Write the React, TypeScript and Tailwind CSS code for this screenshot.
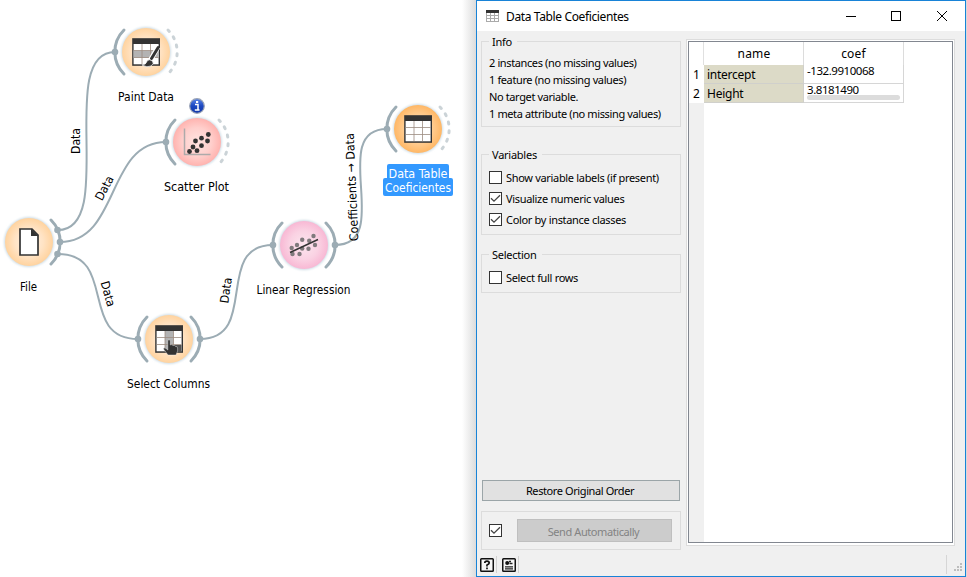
import React from "react";

const LINK = "#9cacb4";

type Tone = "orange" | "red" | "pink" | "amber";

function Arc({ side, dashed }: { side: "l" | "r"; dashed?: boolean }) {
  const d = side === "l" ? "M-22 -22A31 31 0 0 0 -22 22" : "M22 -22A31 31 0 0 1 22 22";
  return (
    <path
      d={d}
      fill="none"
      stroke={dashed ? "#cbd3d7" : LINK}
      strokeWidth={3}
      strokeLinecap="round"
      strokeDasharray={dashed ? "2 6.7" : undefined}
    />
  );
}

function Node({ x, y, tone, left, right, children }: {
  x: number;
  y: number;
  tone: Tone;
  left?: boolean;
  right?: "solid" | "dashed";
  children: React.ReactNode;
}) {
  return (
    <g transform={`translate(${x} ${y})`}>
      <circle r={25} fill="#cfdde6" filter="url(#soft)" />
      <circle r={24} fill={`url(#${tone})`} />
      {left && <Arc side="l" />}
      {left && <circle cx={-31} r={3.3} fill={LINK} />}
      {right && <Arc side="r" dashed={right === "dashed"} />}
      {right === "solid" && <circle cx={31} r={3.3} fill={LINK} />}
      {children}
    </g>
  );
}

function Label({ x, y, w, children, rotate = 0, fill = "#000" }: {
  x: number;
  y: number;
  w: number;
  children: string;
  rotate?: number;
  fill?: string;
}) {
  return (
    <text
      transform={`translate(${x} ${y}) rotate(${rotate})`}
      textAnchor="middle"
      textLength={w}
      lengthAdjust="spacingAndGlyphs"
      fontSize={12}
      fill={fill}
    >
      {children}
    </text>
  );
}

function TableGlyph({ shade }: { shade?: "row" | "col" }) {
  return (
    <g>
      <rect x={-13.8} y={-13.8} width={27.8} height={27.6} fill="#333" />
      <rect x={-12.4} y={-8} width={25} height={20.3} fill="#fff" />
      {shade === "row" && <rect x={-12.4} y={-1.3} width={25} height={7} fill="#b3b3b3" />}
      {shade === "col" && <rect x={-4} y={-8} width={8.4} height={20.3} fill="#b3b3b3" />}
      <path d="M-4 -8V12.3M4.5 -8V12.3M-12.4 -1.5H12.6M-12.4 5.5H12.6" stroke="#9c8c80" strokeWidth={0.8} />
    </g>
  );
}

const plotDots = [[-8, 9], [-4.5, 4.5], [-0.5, 8.2], [-2, -1.5], [4, 3.2], [4, -4.3], [10, -1.5], [10.8, -8]];
const fitDots = [[-12.3, 3], [-11.5, 9], [-7, 0], [-4.5, 9], [-1.8, -5.2], [-1.8, 3.5], [4.5, 3.8], [5.2, -4.3], [9.5, -9], [11, 0]];

function Workflow() {
  return (
    <svg width={476} height={577} viewBox="0 0 476 577" className="block font-['DejaVu_Sans_Condensed','DejaVu_Sans',sans-serif]">
      <defs>
        <filter id="soft" x="-30%" y="-30%" width="160%" height="160%"><feGaussianBlur stdDeviation="1.3" /></filter>
        <radialGradient id="orange"><stop offset="0" stopColor="#fff3e6" /><stop offset="0.6" stopColor="#ffe3c4" /><stop offset="1" stopColor="#ffd39f" /></radialGradient>
        <radialGradient id="amber"><stop offset="0" stopColor="#ffe3c0" /><stop offset="0.6" stopColor="#ffcc90" /><stop offset="1" stopColor="#ffb765" /></radialGradient>
        <radialGradient id="red"><stop offset="0" stopColor="#ffe4e1" /><stop offset="0.6" stopColor="#ffcfcc" /><stop offset="1" stopColor="#ffb3af" /></radialGradient>
        <radialGradient id="pink"><stop offset="0" stopColor="#fce6ef" /><stop offset="0.6" stopColor="#fad2e3" /><stop offset="1" stopColor="#f8b8d4" /></radialGradient>
        <linearGradient id="blue" x2="0" y2="1"><stop offset="0" stopColor="#5b86e8" /><stop offset="0.5" stopColor="#1c48c0" /><stop offset="1" stopColor="#1237a8" /></linearGradient>
        <linearGradient id="edge"><stop offset="0" stopColor="#fff" /><stop offset="1" stopColor="#dcdcdc" /></linearGradient>
      </defs>
      <rect x={462} y={0} width={14} height={577} fill="url(#edge)" />
      <g fill="none" stroke={LINK} strokeWidth={2}>
        <path d="M58 230C118 230 55 52 115 52" />
        <path d="M60 242C120 242 106 142 166 142" />
        <path d="M58 254C118 254 78 339 138 339" />
        <path d="M200 339C260 339 213 245 273 245" />
        <path d="M335 245C395 245 327 129 387 129" />
      </g>

      <Node x={146} y={52} tone="orange" left right="dashed">
        <TableGlyph shade="row" />
        <path d="M12 -5L4.5 8" stroke="#fff" strokeWidth={5} />
        <path d="M12.2 -4.5L5.5 6.5" stroke="#333" strokeWidth={3} strokeLinecap="round" />
        <path d="M-4 13Q0 13 1 9Q3 6.500 6.500 9Q8.500 12 5 14Q1 16 -4 13Z" fill="#333" stroke="#fff" strokeWidth={0.7} />
      </Node>

      <Node x={197} y={142} tone="red" left right="dashed">
        <path d="M-12.500 -13.500V12.500H13.500" fill="none" stroke="#aeaaaa" strokeWidth={1.500} />
        {plotDots.map(([x, y]) => <circle key={`${x}${y}`} cx={x + 0.5} cy={y + 0.5} r={2.4} fill="#333" />)}
      </Node>
      <circle cx={197} cy={106} r={7.3} fill="url(#blue)" stroke="#9aa3b5" strokeWidth={1.2} />
      <path d="M195 104.500H198V110M194.800 110H199.500" fill="none" stroke="#fff" strokeWidth={1.500} />
      <rect x={196} y={101} width={2.200} height={2} fill="#fff" />

      <Node x={29} y={242} tone="orange">
        <path d="M-9 -13H3L9 -7V13H-9Z" fill="#fff" stroke="#333" strokeWidth={1.700} />
        <path d="M2 -13.500L9.500 -6H2Z" fill="#333" />
      </Node>
      <path d="M51 220A31 31 0 0 1 51 264" fill="none" stroke={LINK} strokeWidth={3} strokeLinecap="round" />
      <circle cx={57.500} cy={230} r={3.300} fill={LINK} />
      <circle cx={60} cy={242} r={3.300} fill={LINK} />
      <circle cx={57.500} cy={254} r={3.300} fill={LINK} />

      <Node x={169} y={339} tone="orange" left right="solid">
        <TableGlyph shade="col" />
        <rect x={4.500} y={6} width={8} height={7} fill="#555" />
        <path d="M-1.200 1.500Q0 0 1.300 1.500V6Q3 5 4 6.500Q6 5.800 6.500 7.500Q8.600 7 8.600 9V12L7 16H-1L-5.500 10Q-5 8 -3 9.500L-1.200 11Z" fill="#333" stroke="#fff" strokeWidth={0.400} />
      </Node>

      <Node x={304} y={245} tone="pink" left right="solid">
        {fitDots.map(([x, y]) => <circle key={`${x}${y}`} cx={x} cy={y} r={2.200} fill="#807a7d" />)}
        <path d="M-14 7.500L14 -5.500" stroke="#333" strokeWidth={1.500} />
      </Node>

      <Node x={418} y={129} tone="amber" left right="dashed"><TableGlyph /></Node>

      <Label x={146} y={101} w={56}>Paint Data</Label>
      <Label x={196.500} y={191} w={65}>Scatter Plot</Label>
      <Label x={28.500} y={291} w={17}>File</Label>
      <Label x={168.500} y={388} w={83}>Select Columns</Label>
      <Label x={303.500} y={294} w={94}>Linear Regression</Label>
      <path d="M389 164H447Q449 164 449 166V178H451Q453 178 453 180V194Q453 196 451 196H385Q383 196 383 194V180Q383 178 385 178H387V166Q387 164 389 164Z" fill="#3399ff" />
      <Label x={418} y={178} w={59} fill="#fff">Data Table</Label>
      <Label x={418} y={192} w={66} fill="#fff">Coeficientes</Label>

      <Label x={80} y={141} w={26} rotate={-90}>Data</Label>
      <Label x={108} y={190} w={26} rotate={-62}>Data</Label>
      <Label x={104} y={295} w={26} rotate={74}>Data</Label>
      <Label x={230} y={291} w={26} rotate={-82}>Data</Label>
      <Label x={356} y={187} w={108} rotate={-92.5}>Coefficients → Data</Label>
    </svg>
  );
}

function Group({ title, className, children }: { title?: string; className: string; children: React.ReactNode }) {
  return (
    <section className={`relative w-[200px] border border-[#dcdcdc] ${className}`}>
      {title && <h2 className="absolute -top-[8px] left-[7px] bg-[#f0f0f0] pr-[5px] pl-[3px] leading-4 tracking-[-0.250px]">{title}</h2>}
      {children}
    </section>
  );
}

function Box({ checked }: { checked?: boolean }) {
  return (
    <span className="flex size-[13px] shrink-0 items-center justify-center border border-[#333] bg-white">
      {checked && (
        <svg width="11" height="11" viewBox="0 0 11 11"><path d="M1 5.200L4 8.200L10 2.200" fill="none" stroke="#444" strokeWidth="1.300" /></svg>
      )}
    </span>
  );
}

function Check({ label, checked }: { label: string; checked?: boolean }) {
  return (
    <label className="flex h-[21px] items-center gap-[4px] tracking-[-0.320px] whitespace-nowrap">
      <Box checked={checked} />
      <span>{label}</span>
    </label>
  );
}

function DataTable() {
  return (
    <div className="h-[507px] w-[269px] border border-[#dcdcdc] bg-white p-px pb-[2px]">
      <div className="flex h-full flex-col border border-[#828790] text-[12px] leading-[14px]">
        <div className="flex h-[23px] shrink-0 tracking-[0.2px]">
          <div className="w-[15px] border-r border-[#e0e0e0]" />
          <div className="w-[100px] border-r border-[#dcdcdc] pt-[5px] pl-px text-center">name</div>
          <div className="w-[100px] border-r border-[#dcdcdc] pt-[5px] text-center">coef</div>
        </div>
        <div className="flex h-[19px] shrink-0">
          <div className="w-[15px] pt-[3px] text-center">1</div>
          <div className="w-[100px] border-r border-b border-[#d0d0cc] bg-[#dcdac7] pt-[3px] pl-[3px] tracking-[-0.250px]">intercept</div>
          <div className="w-[100px] border-r border-b border-[#d6d6d6] pl-[3px] text-[11.500px] leading-[12px] tracking-[-0.450px]">-132.9910068</div>
        </div>
        <div className="flex h-[19px] shrink-0">
          <div className="w-[15px] pt-[3px] text-center">2</div>
          <div className="w-[100px] border-r border-b border-[#d0d0cc] bg-[#dcdac7] pt-[3px] pl-[3px] tracking-[-0.250px]">Height</div>
          <div className="w-[100px] border-r border-b border-[#d6d6d6] pl-[3px] text-[11.500px] leading-[12px] tracking-[-0.450px]">
            3.8181490
            <div className="-mt-px h-[5px] w-[93px] rounded-full bg-[#dcdcdc]" />
          </div>
        </div>
        <div className="w-[15px] grow bg-[#f0f0f0]" />
      </div>
    </div>
  );
}

function ToolIcon({ children }: { children: React.ReactNode }) {
  return (
    <span className="flex items-center">
      <svg width="14" height="14" viewBox="0 0 14 14">
        <rect x="0.750" y="0.750" width="12.500" height="12.500" rx="0.800" fill="#f6f6f6" stroke="#111" strokeWidth="1.500" />
        {children}
      </svg>
      <span className="ml-[2px] h-[17px] w-px bg-[#d2d2d2]" />
    </span>
  );
}

function DataWindow() {
  return (
    <main className="flex h-[577px] w-[490px] flex-col border border-[#1883d7] bg-[#f0f0f0] font-['Noto_Sans',sans-serif] text-[11px] leading-[17px] text-black">
      <header className="flex h-[30px] shrink-0 items-center bg-white pl-[9px] text-[12px]">
        <svg width="13" height="12" viewBox="0 0 13 12" shapeRendering="crispEdges">
          <rect width="13" height="12" fill="#aaa" /><rect width="13" height="3" fill="#333" />
          <path d="M1 3h3v2H1zM5 3h3v2H5zM9 3h3v2H9zM1 6h3v2H1zM5 6h3v2H5zM9 6h3v2H9zM1 9h3v2H1zM5 9h3v2H5zM9 9h3v2H9z" fill="#fff" />
        </svg>
        <h1 className="ml-[7px] grow tracking-[-0.370px]">Data Table Coeficientes</h1>
        <svg width="102" height="12" viewBox="0 0 102 12" className="mr-[17px]" fill="none" stroke="#000">
          <path d="M0 6.500H10" /><rect x="45.500" y="1.500" width="9" height="9" /><path d="M91 1L101 11M101 1L91 11" />
        </svg>
      </header>
      <div className="flex h-[519px] shrink-0 pl-[4px]">
        <div className="flex w-[205px] flex-col">
          <Group title="Info" className="mt-[10px] h-[86px] pt-[12px] pl-[7px] tracking-[-0.380px]">
            <p>2 instances (no missing values)</p>
            <p>1 feature (no missing values)</p>
            <p>No target variable.</p>
            <p>1 meta attribute (no missing values)</p>
          </Group>
          <Group title="Variables" className="mt-[27px] h-[81px] pt-[12px] pl-[7px]">
            <Check label="Show variable labels (if present)" />
            <Check label="Visualize numeric values" checked />
            <Check label="Color by instance classes" checked />
          </Group>
          <Group title="Selection" className="mt-[19px] h-[39px] pt-[12px] pl-[7px]">
            <Check label="Select full rows" />
          </Group>
          <button className="mt-[187px] ml-px h-[21px] w-[198px] border border-[#9ba5a8] bg-[#e1e1e1] pr-[2px] leading-[19px] tracking-[-0.400px]">Restore Original Order</button>
          <Group className="mt-[10px] flex h-[39px] items-center pl-[7px]">
            <Box checked />
            <button className="ml-[15px] h-[23px] w-[155px] border border-[#bfbfbf] bg-[#cccccc] pt-px pr-[2px] tracking-[-0.420px] text-[#838383]">Send Automatically</button>
          </Group>
        </div>
        <div className="pt-[8px]"><DataTable /></div>
      </div>
      <footer className="flex grow items-center pt-[3px] pl-[3px]">
        <ToolIcon><path d="M4.800 5Q4.800 3.200 7 3.200T9.200 5Q9.200 6.200 7 7V8.500M7 9.500V11.200" fill="none" stroke="#111" strokeWidth="1.700" /></ToolIcon>
        <span className="w-[5px]" />
        <ToolIcon><circle cx="5.200" cy="5" r="2" fill="#111" /><path d="M7 3.500H9M7.500 5.500H10.500M3 8.800H11M3 10.800H11" stroke="#222" strokeWidth="1.300" /></ToolIcon>
        <span className="ml-auto h-[19px] w-px bg-[#d6d6d6]" />
        <svg width="18" height="19" viewBox="0 0 18 19" shapeRendering="crispEdges">
          <path d="M13 8h2v2h-2zM10 11h2v2h-2zM13 11h2v2h-2zM7 14h2v2H7zM10 14h2v2h-2zM13 14h2v2h-2z" fill="#bdbdbd" />
        </svg>
      </footer>
    </main>
  );
}

export default function App() {
  return (
    <div className="flex h-[577px] w-[967px] overflow-hidden bg-white">
      <Workflow />
      <DataWindow />
      <div className="w-px bg-[#d9d9d9]" />
    </div>
  );
}
